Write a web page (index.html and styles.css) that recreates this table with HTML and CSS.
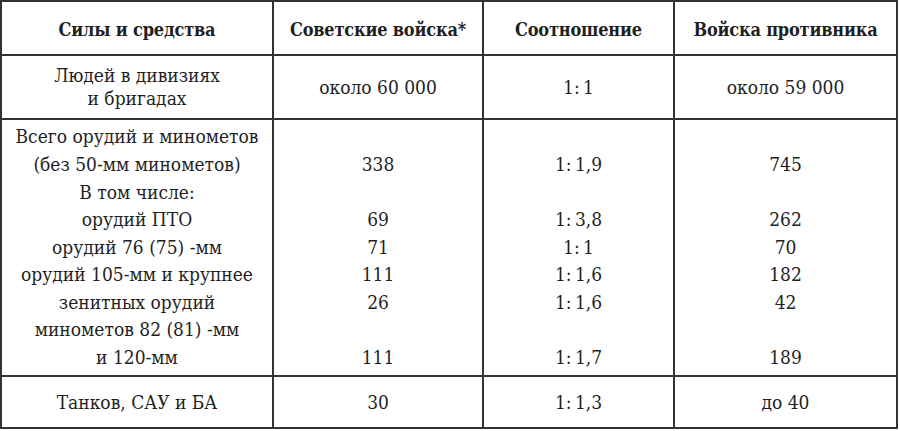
FILE: index.html
```html
<!DOCTYPE html>
<html lang="ru">
<head>
<meta charset="utf-8">
<title>Силы и средства</title>
<link rel="stylesheet" href="styles.css">
</head>
<body>
<table class="forces">
  <colgroup>
    <col class="c1"><col class="c2"><col class="c3"><col class="c4">
  </colgroup>
  <thead>
    <tr class="head">
      <th>Силы и средства</th>
      <th>Советские войска*</th>
      <th>Соотношение</th>
      <th>Войска противника</th>
    </tr>
  </thead>
  <tbody>
    <tr class="people">
      <td><div class="ln">Людей в дивизиях</div><div class="ln">и бригадах</div></td>
      <td>около 60 000</td>
      <td>1:&thinsp;1</td>
      <td>около 59 000</td>
    </tr>
    <tr class="guns">
      <td>
        <div class="ln">Всего орудий и минометов</div>
        <div class="ln">(без 50-мм минометов)</div>
        <div class="ln">В том числе:</div>
        <div class="ln">орудий ПТО</div>
        <div class="ln">орудий 76 (75) -мм</div>
        <div class="ln">орудий 105-мм и крупнее</div>
        <div class="ln">зенитных орудий</div>
        <div class="ln">минометов 82 (81) -мм</div>
        <div class="ln">и 120-мм</div>
      </td>
      <td>
        <div class="ln"></div>
        <div class="ln">338</div>
        <div class="ln"></div>
        <div class="ln">69</div>
        <div class="ln">71</div>
        <div class="ln">111</div>
        <div class="ln">26</div>
        <div class="ln"></div>
        <div class="ln">111</div>
      </td>
      <td>
        <div class="ln"></div>
        <div class="ln">1:&thinsp;1,9</div>
        <div class="ln"></div>
        <div class="ln">1:&thinsp;3,8</div>
        <div class="ln">1:&thinsp;1</div>
        <div class="ln">1:&thinsp;1,6</div>
        <div class="ln">1:&thinsp;1,6</div>
        <div class="ln"></div>
        <div class="ln">1:&thinsp;1,7</div>
      </td>
      <td>
        <div class="ln"></div>
        <div class="ln">745</div>
        <div class="ln"></div>
        <div class="ln">262</div>
        <div class="ln">70</div>
        <div class="ln">182</div>
        <div class="ln">42</div>
        <div class="ln"></div>
        <div class="ln">189</div>
      </td>
    </tr>
    <tr class="tanks">
      <td>Танков, САУ и БА</td>
      <td>30</td>
      <td>1:&thinsp;1,3</td>
      <td>до 40</td>
    </tr>
  </tbody>
</table>
</body>
</html>
```
FILE: styles.css
```css
html, body {
  margin: 0;
  padding: 0;
  background: #ffffff;
}

.forces {
  border-collapse: separate;
  border-spacing: 0;
  table-layout: fixed;
  width: 898px;
  border-left: 2px solid #333333;
  border-top: 2px solid #333333;
  font-family: "DejaVu Serif Condensed", "DejaVu Serif", "Liberation Serif", serif;
  font-stretch: condensed;
  font-size: 19px;
  color: #1f1f1f;
}

.c1 { width: 272px; }
.c2 { width: 210px; }
.c3 { width: 191px; }
.c4 { width: 223px; }

.forces th,
.forces td {
  box-sizing: border-box;
  border-right: 2px solid #333333;
  border-bottom: 2px solid #333333;
  padding: 0;
  text-align: center;
  vertical-align: middle;
  white-space: nowrap;
}

.forces th {
  font-size: 18px;
  font-weight: bold;
  letter-spacing: -0.2px;
  padding-top: 2px;
}

.head { height: 54px; }
.people { height: 64px; }
.guns { height: 257px; }
.tanks { height: 52px; }

.people .ln {
  height: 23px;
  line-height: 23px;
}

.guns .ln {
  height: 27.6px;
  line-height: 27.6px;
}
```
